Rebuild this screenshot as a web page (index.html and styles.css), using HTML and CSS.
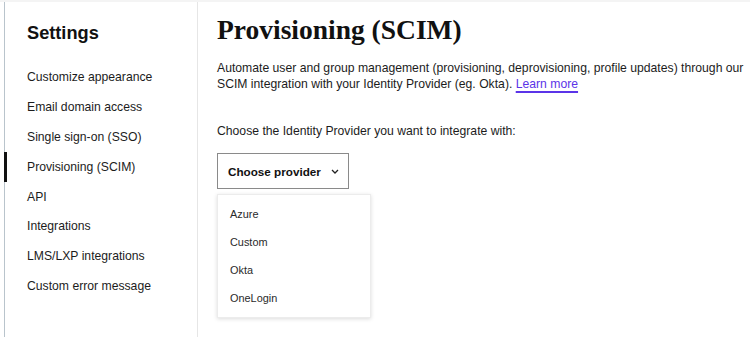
FILE: index.html
```html
<!DOCTYPE html>
<html lang="en">
<head>
<meta charset="utf-8">
<link rel="stylesheet" href="styles.css">
</head>
<body>
<div class="app">
  <aside class="sidebar">
    <h2 class="side-title">Settings</h2>
    <nav class="nav">
      <a class="nav-item">Customize appearance</a>
      <a class="nav-item">Email domain access</a>
      <a class="nav-item">Single sign-on (SSO)</a>
      <a class="nav-item active">Provisioning (SCIM)</a>
      <a class="nav-item">API</a>
      <a class="nav-item">Integrations</a>
      <a class="nav-item">LMS/LXP integrations</a>
      <a class="nav-item">Custom error message</a>
    </nav>
  </aside>
  <main class="main">
    <h1 class="title">Provisioning (SCIM)</h1>
    <p class="desc">Automate user and group management (provisioning, deprovisioning, profile updates) through our SCIM integration with your Identity Provider (eg. Okta). <a class="link">Learn more</a></p>
    <p class="label">Choose the Identity Provider you want to integrate with:</p>
    <button class="select">Choose provider
      <svg class="chev" width="8" height="5" viewBox="0 0 8 5"><path d="M1 1l3 3 3-3" fill="none" stroke="#222" stroke-width="1.3"/></svg>
    </button>
    <ul class="menu">
      <li class="menu-item">Azure</li>
      <li class="menu-item">Custom</li>
      <li class="menu-item">Okta</li>
      <li class="menu-item">OneLogin</li>
    </ul>
  </main>
</div>
</body>
</html>
```
FILE: styles.css
```css
* { box-sizing: border-box; }
html, body { margin: 0; padding: 0; background: #fff; }
body {
  font-family: "Liberation Sans", Arial, sans-serif;
  color: #1c1c1c;
  height: 337px;
  overflow: hidden;
}
.app {
  display: flex;
  height: 337px;
  border-top: 2px solid #f4f4f4;
}
.sidebar {
  flex: 0 0 194px;
  margin-left: 4px;
  border-left: 1px solid #b9c4cc;
  border-right: 1px solid #e6e6e6;
  padding: 20px 0 0 0;
  height: 335px;
}
.side-title {
  margin: 0 0 19px 22px;
  font-size: 18.2px;
  font-weight: 700;
  line-height: 22px;
  color: #111;
}
.nav { display: flex; flex-direction: column; }
.nav-item {
  display: block;
  font-size: 12.2px;
  line-height: 17px;
  padding: 6.4px 0 6.4px 20px;
  color: #1c1c1c;
  border-left: 3px solid transparent;
  margin-left: -1px;
}
.nav-item.active { border-left-color: #111; }
.main {
  flex: 1;
  padding: 0 0 0 19px;
}
.title {
  font-family: "Liberation Serif", serif;
  font-weight: 700;
  font-size: 27.5px;
  line-height: 32px;
  margin: 12px 0 14px 0;
  color: #111;
}
.desc {
  font-size: 12.2px;
  line-height: 16px;
  margin: 0 0 31px 0;
  color: #1c1c1c;
}
.link {
  color: #5b34e8;
  text-decoration: underline;
  text-decoration-thickness: 1.5px;
  text-underline-offset: 3px;
}
.label {
  font-size: 12.2px;
  line-height: 17px;
  margin: 0 0 13px 0;
}
.select {
  display: flex;
  align-items: center;
  gap: 10px;
  width: 132px;
  height: 36px;
  padding: 0 0 0 10px;
  border: 1px solid #8a8a8a;
  background: #fff;
  font-family: inherit;
  font-size: 11.7px;
  font-weight: 700;
  color: #111;
}
.chev { margin-top: 1px; }
.menu {
  list-style: none;
  margin: 5px 0 0 0;
  padding: 5px 0;
  width: 154px;
  border: 1px solid #ececec;
  box-shadow: 0 1px 4px rgba(0,0,0,0.14);
  background: #fff;
}
.menu-item {
  font-size: 10.9px;
  line-height: 16px;
  padding: 6px 12px;
  color: #2a2a2a;
}
```
